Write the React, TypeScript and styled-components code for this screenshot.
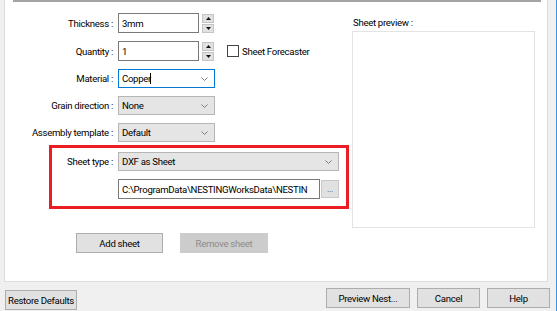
import React from 'react';
import styled, { createGlobalStyle } from 'styled-components';

const GlobalStyle = createGlobalStyle`
  html, body {
    margin: 0;
    padding: 0;
    background: #f0f0f0;
  }
  body {
    font-family: Roboto, 'Liberation Sans', Arial, sans-serif;
    font-size: 9.6px;
    letter-spacing: -0.3px;
    color: #000;
  }
`;

const Frame = styled.div`
  width: 556px;
  height: 311px;
  border-right: 1px solid #3d95e0;
  background: #f0f0f0;
  display: flex;
  flex-direction: column;
  overflow: hidden;
`;

const Panel = styled.div`
  margin: 0 8px 0 4px;
  height: 281px;
  background: #fff;
  border: 1px solid #dcdcdc;
  border-top: none;
  display: flex;
  flex-direction: column;
`;

const TopRule = styled.div`
  height: 2px;
  margin: 0 6px 0 8px;
  background: #a3a3a3;
`;

const PanelBody = styled.div`
  display: flex;
  padding-top: 11px;
`;

const FormColumn = styled.div`
  width: 347px;
  display: flex;
  flex-direction: column;
`;

const FieldGrid = styled.div<{ $labelWidth: number }>`
  display: grid;
  grid-template-columns: ${({ $labelWidth }) => $labelWidth}px auto;
  column-gap: 5px;
  row-gap: 8px;
  align-items: center;
`;

const Label = styled.div`
  text-align: right;
  white-space: nowrap;
`;

const Control = styled.div`
  display: flex;
  align-items: center;
`;

const TextBox = styled.div<{ $width: number }>`
  box-sizing: border-box;
  width: ${({ $width }) => $width}px;
  height: 20px;
  border: 1px solid #7a7a7a;
  background: #fff;
  padding: 0 3px;
  display: flex;
  align-items: center;
  white-space: nowrap;
  overflow: hidden;
`;

const Spinner = styled.div`
  display: flex;
  flex-direction: column;
  gap: 1px;
  margin-left: 3px;
`;

const SpinHalf = styled.div`
  box-sizing: border-box;
  width: 12px;
  height: 9px;
  background: #e1e1e1;
  border: 1px solid #c4c4c4;
  display: flex;
  align-items: center;
  justify-content: center;
`;

const Combo = styled.div<{ $width: number; $focused?: boolean }>`
  box-sizing: border-box;
  width: ${({ $width }) => $width}px;
  height: 19px;
  border: 1px solid ${({ $focused }) => ($focused ? '#0078d7' : '#b5b5b5')};
  background: ${({ $focused }) => ($focused ? '#fff' : '#e5e5e5')};
  padding: 0 6px 0 3px;
  display: flex;
  align-items: center;
  justify-content: space-between;
  white-space: nowrap;
`;

const Caret = styled.span`
  display: inline-block;
  width: 1px;
  height: 11px;
  background: #000;
  vertical-align: middle;
  margin-left: -1px;
`;

const CheckBox = styled.div`
  box-sizing: border-box;
  width: 12px;
  height: 12px;
  border: 1px solid #444;
  background: #fff;
  margin: 0 3px 0 13px;
`;

const Highlight = styled.div`
  box-sizing: border-box;
  width: 300px;
  height: 64px;
  margin: 3px 0 0 44px;
  border: 3px solid #ec1c24;
  padding: 4px 7px 0 0;
`;

const BrowseButton = styled.div`
  box-sizing: border-box;
  width: 18px;
  height: 18px;
  margin-left: 1px;
  background: #e1e1e1;
  border: 1px solid #c8c8c8;
  color: #555;
  display: flex;
  align-items: flex-end;
  justify-content: center;
  padding-bottom: 3px;
  font-size: 9px;
  line-height: 1;
`;

const ButtonRow = styled.div`
  display: flex;
  gap: 17px;
  margin: 24px 0 0 71px;
`;

const Button = styled.div<{ $width: number; $disabled?: boolean }>`
  box-sizing: border-box;
  width: ${({ $width }) => $width}px;
  height: 20px;
  background: ${({ $disabled }) => ($disabled ? '#cccccc' : '#e1e1e1')};
  border: 1px solid ${({ $disabled }) => ($disabled ? '#cccccc' : '#adadad')};
  color: ${({ $disabled }) => ($disabled ? '#8d8d8d' : '#000')};
  display: flex;
  align-items: center;
  justify-content: center;
  white-space: nowrap;
`;

const PreviewColumn = styled.div`
  width: 183px;
  display: flex;
  flex-direction: column;
`;

const PreviewLabel = styled.div`
  height: 13px;
  line-height: 13px;
  padding-left: 1px;
  margin: 3px 0 2px;
`;

const PreviewBox = styled.div`
  height: 197px;
  border: 1px solid #e3e3e3;
  box-sizing: border-box;
`;

const Footer = styled.div`
  display: flex;
  align-items: flex-start;
  padding: 6px 6px 0 5px;
  gap: 7px;
`;

const Spacer = styled.div`
  flex: 1;
`;

const Chevron = () => (
  <svg width="7" height="4" viewBox="0 0 7 4">
    <polyline points="0.5,0.5 3.5,3.5 6.5,0.5" fill="none" stroke="#7a7a7a" strokeWidth="1" />
  </svg>
);

const Arrow = ({ up }: { up?: boolean }) => (
  <svg width="5" height="3" viewBox="0 0 5 3">
    <polygon points={up ? '2.5,0 5,3 0,3' : '0,0 5,0 2.5,3'} fill="#111" />
  </svg>
);

const SpinBox = ({ value }: { value: string }) => (
  <Control>
    <TextBox $width={81}>{value}</TextBox>
    <Spinner>
      <SpinHalf>
        <Arrow up />
      </SpinHalf>
      <SpinHalf>
        <Arrow />
      </SpinHalf>
    </Spinner>
  </Control>
);

export default function App() {
  return (
    <>
      <GlobalStyle />
      <Frame>
        <Panel>
          <TopRule />
          <PanelBody>
            <FormColumn>
              <FieldGrid $labelWidth={108}>
                <Label>Thickness :</Label>
                <SpinBox value="3mm" />
                <Label>Quantity :</Label>
                <Control>
                  <SpinBox value="1" />
                  <CheckBox />
                  <span>Sheet Forecaster</span>
                </Control>
                <Label>Material :</Label>
                <Control>
                  <Combo $width={97} $focused>
                    <span>
                      Copper<Caret />
                    </span>
                    <Chevron />
                  </Combo>
                </Control>
                <Label>Grain direction :</Label>
                <Control>
                  <Combo $width={97}>
                    <span>None</span>
                    <Chevron />
                  </Combo>
                </Control>
                <Label>Assembly template :</Label>
                <Control>
                  <Combo $width={97}>
                    <span>Default</span>
                    <Chevron />
                  </Combo>
                </Control>
              </FieldGrid>
              <Highlight>
                <FieldGrid $labelWidth={61}>
                  <Label>Sheet type :</Label>
                  <Control>
                    <Combo $width={221}>
                      <span>DXF as Sheet</span>
                      <Chevron />
                    </Combo>
                  </Control>
                  <div />
                  <Control>
                    <TextBox $width={202}>C:\ProgramData\NESTINGWorksData\NESTIN</TextBox>
                    <BrowseButton>...</BrowseButton>
                  </Control>
                </FieldGrid>
              </Highlight>
              <ButtonRow>
                <Button $width={87}>Add sheet</Button>
                <Button $width={88} $disabled>
                  Remove sheet
                </Button>
              </ButtonRow>
            </FormColumn>
            <PreviewColumn>
              <PreviewLabel>Sheet preview :</PreviewLabel>
              <PreviewBox />
            </PreviewColumn>
          </PanelBody>
        </Panel>
        <Footer>
          <Button $width={72} style={{ marginTop: 2 }}>
            Restore Defaults
          </Button>
          <Spacer />
          <Button $width={84}>Preview Nest...</Button>
          <Button $width={63}>Cancel</Button>
          <Button $width={63}>Help</Button>
        </Footer>
      </Frame>
    </>
  );
}
